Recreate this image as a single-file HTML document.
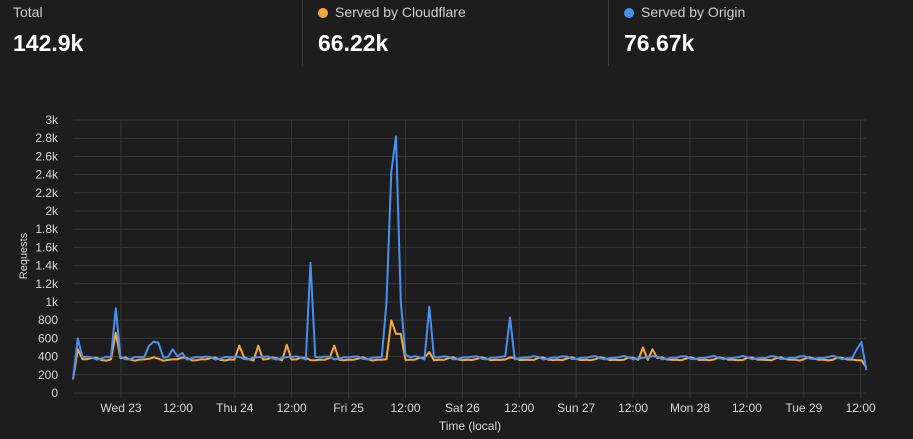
<!DOCTYPE html>
<html><head><style>
body{margin:0;width:913px;height:439px;background:#1d1d1d;font-family:"Liberation Sans",sans-serif;color:#e6e6e6;overflow:hidden;position:relative}
.p{position:absolute;top:0;height:66px;width:290px}
.l{position:absolute;top:4px;font-size:14px;color:#cfcfcf}
.v{position:absolute;top:30px;font-size:23px;font-weight:bold;color:#fff}
.d{display:inline-block;width:10px;height:10px;border-radius:50%;margin-right:7px;vertical-align:-1px}
.sep{position:absolute;top:0;width:1px;height:66px;background:#383838}
</style></head><body>
<div class="p" style="left:13px"><div class="l">Total</div><div class="v">142.9k</div></div>
<div class="sep" style="left:302px"></div>
<div class="p" style="left:318px"><div class="l"><span class="d" style="background:#f6a83d"></span>Served by Cloudflare</div><div class="v">66.22k</div></div>
<div class="sep" style="left:608px"></div>
<div class="p" style="left:624px"><div class="l"><span class="d" style="background:#4a90f0"></span>Served by Origin</div><div class="v">76.67k</div></div>
<svg id="s" width="913" height="439" style="position:absolute;left:0;top:0" font-family="Liberation Sans, sans-serif" font-size="12"></svg>
<script>
var s=document.getElementById('s'),h='';
function Y(v){return 393-v*0.091}
for(var i=0;i<=15;i++){var y=Y(i*200);h+='<line x1="73" x2="866" y1="'+y+'" y2="'+y+'" stroke="#363636"/>';
var t=i==0?'0':(i*200>=1000?(i*200/1000)+'k':i*200+'');h+='<text x="58" y="'+(y+4)+'" fill="#d8d8d8" text-anchor="end">'+t+'</text>';}
var lab=['Wed 23','12:00','Thu 24','12:00','Fri 25','12:00','Sat 26','12:00','Sun 27','12:00','Mon 28','12:00','Tue 29','12:00'];
for(var i=0;i<14;i++){var x=121+i*56.9;h+='<line x1="'+x+'" x2="'+x+'" y1="120" y2="398" stroke="#363636"/>';h+='<text x="'+x+'" y="412" fill="#d8d8d8" text-anchor="middle">'+lab[i]+'</text>';}
h+='<text x="470" y="430" fill="#d8d8d8" text-anchor="middle">Time (local)</text>';
h+='<text transform="translate(27,256) rotate(-90)" fill="#d8d8d8" text-anchor="middle" font-size="11">Requests</text>';
var bs={78:600,117:930,150:520,155:565,160:550,172:480,183:440,310:1430,386:1000,391:2430,396:2820,400:1000,405:420,428:950,509:830,855:480,860:560,866:250,73:150};
var os={78:480,117:660,238:520,258:520,286:530,333:520,391:800,396:650,400:650,428:450,641:500,651:480,866:280,73:150};
function pts(sp,base,seed){var p=[];for(var x=73;x<=867;x+=4.75){var v=base+14*Math.sin(x*0.21+seed)+8*Math.sin(x*0.9+seed*2);for(var k in sp){if(Math.abs(x-k)<2.4)v=sp[k];}p.push(x.toFixed(1)+','+Y(v).toFixed(1));}return p.join(' ');}
h+='<polyline points="'+pts(os,372,1)+'" fill="none" stroke="#f6a83d" stroke-width="2" stroke-linejoin="round"/>';
h+='<polyline points="'+pts(bs,388,3)+'" fill="none" stroke="#4a90f0" stroke-width="2" stroke-linejoin="round"/>';
s.innerHTML=h;
</script>
</body></html>
